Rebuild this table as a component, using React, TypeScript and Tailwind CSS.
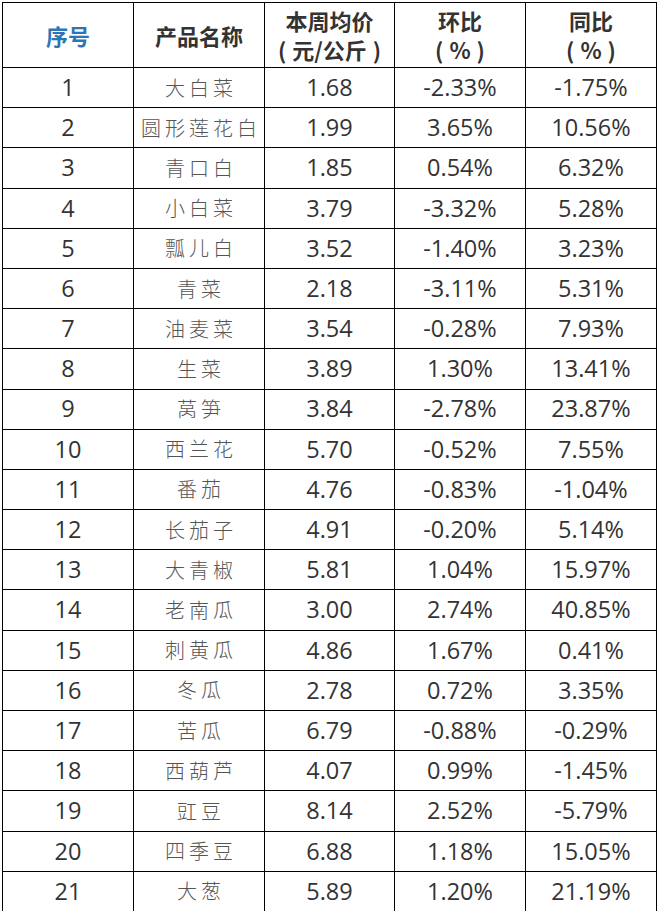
const rows: [number, string, string, string, string][] = [
  [1, "大白菜", "1.68", "-2.33%", "-1.75%"],
  [2, "圆形莲花白", "1.99", "3.65%", "10.56%"],
  [3, "青口白", "1.85", "0.54%", "6.32%"],
  [4, "小白菜", "3.79", "-3.32%", "5.28%"],
  [5, "瓢儿白", "3.52", "-1.40%", "3.23%"],
  [6, "青菜", "2.18", "-3.11%", "5.31%"],
  [7, "油麦菜", "3.54", "-0.28%", "7.93%"],
  [8, "生菜", "3.89", "1.30%", "13.41%"],
  [9, "莴笋", "3.84", "-2.78%", "23.87%"],
  [10, "西兰花", "5.70", "-0.52%", "7.55%"],
  [11, "番茄", "4.76", "-0.83%", "-1.04%"],
  [12, "长茄子", "4.91", "-0.20%", "5.14%"],
  [13, "大青椒", "5.81", "1.04%", "15.97%"],
  [14, "老南瓜", "3.00", "2.74%", "40.85%"],
  [15, "刺黄瓜", "4.86", "1.67%", "0.41%"],
  [16, "冬瓜", "2.78", "0.72%", "3.35%"],
  [17, "苦瓜", "6.79", "-0.88%", "-0.29%"],
  [18, "西葫芦", "4.07", "0.99%", "-1.45%"],
  [19, "豇豆", "8.14", "2.52%", "-5.79%"],
  [20, "四季豆", "6.88", "1.18%", "15.05%"],
  [21, "大葱", "5.89", "1.20%", "21.19%"],
];

const cell = "border-[1.5px] border-black text-center align-middle p-0";
const head =
  "font-['Noto_Sans_CJK_SC',sans-serif] text-[22px] font-bold leading-[29px] whitespace-nowrap";
const num = "font-['Open_Sans','Noto_Sans',sans-serif] text-[23.5px] text-[#333]";

// wide brackets as in the source doc
function Paren({ children }: { children: string }) {
  return (
    <span className="whitespace-nowrap">
      <span className="mr-[6px]">(</span>
      {children}
      <span className="ml-[6px]">)</span>
    </span>
  );
}

export default function App() {
  return (
    <div className="h-[911px] w-[660px] overflow-hidden bg-white pl-[2px] pt-[2px]">
      <table className="w-[654px] table-fixed border-collapse">
        <colgroup>
          <col className="w-[131px]" />
          <col className="w-[131px]" />
          <col className="w-[130px]" />
          <col className="w-[131px]" />
          <col className="w-[131px]" />
        </colgroup>
        <thead>
          <tr className="h-[65px]">
            <th className={`${cell} ${head} text-[#2e75b6]`}>序号</th>
            <th className={`${cell} ${head} text-[#333]`}>产品名称</th>
            <th className={`${cell} ${head} text-[#333]`}>
              本周均价
              <br />
              <Paren>元/公斤</Paren>
            </th>
            <th className={`${cell} ${head} text-[#333]`}>
              环比
              <br />
              <Paren>%</Paren>
            </th>
            <th className={`${cell} ${head} text-[#333]`}>
              同比
              <br />
              <Paren>%</Paren>
            </th>
          </tr>
        </thead>
        <tbody>
          {rows.map(([id, name, price, mom, yoy]) => (
            <tr key={id} className="h-[40.2px]">
              <td className={`${cell} ${num}`}>{id}</td>
              <td
                className={`${cell} pl-[4px] font-['Noto_Sans_CJK_SC',sans-serif] text-[20px] font-light tracking-[4px] text-[#555]`}
              >
                {name}
              </td>
              <td className={`${cell} ${num}`}>{price}</td>
              <td className={`${cell} ${num}`}>{mom}</td>
              <td className={`${cell} ${num}`}>{yoy}</td>
            </tr>
          ))}
        </tbody>
      </table>
    </div>
  );
}
